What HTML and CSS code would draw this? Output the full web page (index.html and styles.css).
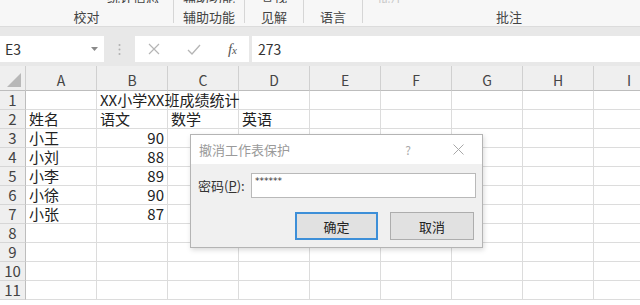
FILE: index.html
```html
<!DOCTYPE html>
<html lang="zh-CN">
<head>
  <meta charset="UTF-8" />
  <title>撤消工作表保护</title>
  <link rel="stylesheet" href="styles.css">
</head>
<body>

  <div class="ribbon">
    <div class="group g-proof">
      <div class="cut"><span class="cut-text left">统计信息</span></div>
      <div class="glabel">校对</div>
    </div>
    <div class="group g-access">
      <div class="cut"><span class="cut-text">辅助功能</span></div>
      <div class="glabel">辅助功能</div>
    </div>
    <div class="group g-insight">
      <div class="cut"><span class="cut-text">查找</span></div>
      <div class="glabel">见解</div>
    </div>
    <div class="group g-lang">
      <div class="cut"></div>
      <div class="glabel">语言</div>
    </div>
    <div class="group g-comment">
      <div class="cut"><span class="cut-text pale">批注</span></div>
      <div class="glabel">批注</div>
    </div>
  </div>

  <div class="formula-bar">
    <div class="name-box">
      <span>E3</span>
      <svg class="arrow" width="7" height="4" viewBox="0 0 7 4"><path d="M0 0 L7 0 L3.5 4 Z" fill="#8a8a8a"/></svg>
    </div>
    <div class="grip">
      <svg width="3" height="13" viewBox="0 0 3 13"><circle cx="1.5" cy="2" r="1" fill="#b0b0b0"/><circle cx="1.5" cy="6.5" r="1" fill="#b0b0b0"/><circle cx="1.5" cy="11" r="1" fill="#b0b0b0"/></svg>
    </div>
    <div class="fx-box">
      <svg width="12" height="12" viewBox="0 0 12 12"><path d="M1 1 L11 11 M11 1 L1 11" stroke="#b5b5b5" stroke-width="1.2" fill="none"/></svg>
      <svg width="14" height="11" viewBox="0 0 14 11"><path d="M1 6 L5 10 L13 1" stroke="#b5b5b5" stroke-width="1.3" fill="none"/></svg>
      <span class="fx">f<span class="x">x</span></span>
    </div>
    <div class="formula-input">273</div>
  </div>

  <div class="sheet">
    <div class="grid">
      <div class="corner"><svg width="14" height="14" viewBox="0 0 14 14"><path d="M14 0 L14 14 L0 14 Z" fill="#b8b8b8"/></svg></div>
      <div class="colh">A</div><div class="colh">B</div><div class="colh">C</div><div class="colh">D</div><div class="colh">E</div><div class="colh">F</div><div class="colh">G</div><div class="colh">H</div><div class="colh">I</div>

      <div class="rowh">1</div><div class="cell"></div><div class="cell overflow">XX小学XX班成绩统计</div><div class="cell"></div><div class="cell"></div><div class="cell"></div><div class="cell"></div><div class="cell"></div><div class="cell"></div><div class="cell"></div>
      <div class="rowh">2</div><div class="cell">姓名</div><div class="cell">语文</div><div class="cell">数学</div><div class="cell">英语</div><div class="cell"></div><div class="cell"></div><div class="cell"></div><div class="cell"></div><div class="cell"></div>
      <div class="rowh">3</div><div class="cell">小王</div><div class="cell num">90</div><div class="cell"></div><div class="cell"></div><div class="cell"></div><div class="cell"></div><div class="cell"></div><div class="cell"></div><div class="cell"></div>
      <div class="rowh">4</div><div class="cell">小刘</div><div class="cell num">88</div><div class="cell"></div><div class="cell"></div><div class="cell"></div><div class="cell"></div><div class="cell"></div><div class="cell"></div><div class="cell"></div>
      <div class="rowh">5</div><div class="cell">小李</div><div class="cell num">89</div><div class="cell"></div><div class="cell"></div><div class="cell"></div><div class="cell"></div><div class="cell"></div><div class="cell"></div><div class="cell"></div>
      <div class="rowh">6</div><div class="cell">小徐</div><div class="cell num">90</div><div class="cell"></div><div class="cell"></div><div class="cell"></div><div class="cell"></div><div class="cell"></div><div class="cell"></div><div class="cell"></div>
      <div class="rowh">7</div><div class="cell">小张</div><div class="cell num">87</div><div class="cell"></div><div class="cell"></div><div class="cell"></div><div class="cell"></div><div class="cell"></div><div class="cell"></div><div class="cell"></div>
      <div class="rowh">8</div><div class="cell"></div><div class="cell"></div><div class="cell"></div><div class="cell"></div><div class="cell"></div><div class="cell"></div><div class="cell"></div><div class="cell"></div><div class="cell"></div>
      <div class="rowh">9</div><div class="cell"></div><div class="cell"></div><div class="cell"></div><div class="cell"></div><div class="cell"></div><div class="cell"></div><div class="cell"></div><div class="cell"></div><div class="cell"></div>
      <div class="rowh">10</div><div class="cell"></div><div class="cell"></div><div class="cell"></div><div class="cell"></div><div class="cell"></div><div class="cell"></div><div class="cell"></div><div class="cell"></div><div class="cell"></div>
      <div class="rowh">11</div><div class="cell"></div><div class="cell"></div><div class="cell"></div><div class="cell"></div><div class="cell"></div><div class="cell"></div><div class="cell"></div><div class="cell"></div><div class="cell"></div>
    </div>

    <div class="dialog">
      <div class="dlg-title">
        <span class="dlg-name">撤消工作表保护</span>
        <span class="dlg-help">?</span>
        <svg class="dlg-close" width="11" height="11" viewBox="0 0 11 11"><path d="M0.5 0.5 L10.5 10.5 M10.5 0.5 L0.5 10.5" stroke="#a8a8a8" stroke-width="1" fill="none"/></svg>
      </div>
      <div class="dlg-body">
        <div class="pw-row">
          <label class="pw-label">密码(<u>P</u>):</label>
          <div class="pw-input">******</div>
        </div>
        <div class="btn-row">
          <button class="btn primary">确定</button>
          <button class="btn">取消</button>
        </div>
      </div>
    </div>
  </div>

</body>
</html>
```

FILE: styles.css
```css
body {
  margin: 0;
  width: 640px;
  height: 305px;
  overflow: hidden;
  background: #ffffff;
  font-family: "Noto Sans CJK SC", "Noto Sans", sans-serif;
  color: #333;
}

/* ribbon */
.ribbon {
  display: flex;
  height: 26px;
  background: #f7f7f7;
  border-bottom: 1px solid #dcdcdc;
  overflow: hidden;
}

.group {
  flex-shrink: 0;
  border-right: 1px solid #d6d6d6;
  height: 23px;
}

.g-proof { width: 173px; }
.g-access { width: 70px; }
.g-insight { width: 58px; }
.g-lang { width: 58px; }
.g-comment { width: 292px; border-right: none; }

.cut {
  height: 3px;
  overflow: hidden;
}

.cut-text {
  display: block;
  font-size: 13px;
  line-height: 13px;
  margin-top: -10px;
  text-align: center;
  color: #444;
}

.cut-text.left {
  text-align: right;
  padding-right: 14px;
}

.cut-text.pale {
  color: #c8c8c8;
  text-align: left;
  padding-left: 14px;
}

.glabel {
  font-size: 13px;
  line-height: 20px;
  margin-top: 4px;
  text-align: center;
  color: #444;
}

/* formula bar */
.formula-bar {
  display: flex;
  align-items: stretch;
  background: #e8e8e8;
  padding: 9px 0 4px 0;
  height: 26px;
}

.name-box {
  width: 104px;
  background: #fff;
  display: flex;
  align-items: center;
  justify-content: space-between;
  padding: 0 6px 0 5px;
  box-sizing: border-box;
  font-size: 14px;
  color: #333;
}

.grip {
  width: 31px;
  display: flex;
  align-items: center;
  justify-content: center;
}

.fx-box {
  width: 114px;
  background: #fff;
  display: flex;
  align-items: center;
  justify-content: space-between;
  padding: 0 12px 0 13px;
  box-sizing: border-box;
}

.fx {
  font-family: "Liberation Serif", serif;
  font-style: italic;
  font-size: 15px;
  color: #555;
}

.fx .x {
  font-size: 11px;
}

.formula-input {
  flex: 1;
  margin-left: 3px;
  background: #fff;
  font-size: 14px;
  line-height: 26px;
  padding-left: 6px;
  color: #333;
}

/* sheet */
.sheet {
  position: relative;
  overflow: hidden;
  height: 240px;
}

.grid {
  display: grid;
  grid-template-columns: 26px repeat(9, 71px);
  grid-template-rows: 25px repeat(11, 19px);
  width: 665px;
}

.corner,
.colh,
.rowh {
  background: #efefef;
  color: #444;
  box-sizing: border-box;
}

.corner {
  display: flex;
  align-items: flex-end;
  justify-content: flex-end;
  padding: 0 4px 3px 0;
  border-right: 1px solid #cfcfcf;
  border-bottom: 1px solid #bdbdbd;
}

.colh {
  font-size: 14px;
  text-align: center;
  border-right: 1px solid #d0d0d0;
  border-bottom: 1px solid #bdbdbd;
  padding-top: 4px;
  line-height: 20px;
}

.rowh {
  font-size: 15px;
  line-height: 18px;
  text-align: center;
  border-right: 1px solid #bdbdbd;
  border-bottom: 1px solid #d6d6d6;
}

.cell {
  border-right: 1px solid #dcdcdc;
  border-bottom: 1px solid #dcdcdc;
  font-size: 15px;
  line-height: 18px;
  padding: 0 3px;
  box-sizing: border-box;
  white-space: nowrap;
  color: #222;
}

.cell.overflow {
  overflow: visible;
  position: relative;
  z-index: 1;
}

.cell.num {
  text-align: right;
}

/* dialog */
.dialog {
  position: absolute;
  left: 190px;
  top: 68px;
  width: 293px;
  height: 114px;
  border: 1px solid #b4b4b4;
  box-sizing: border-box;
  background: #f0f0f0;
  box-shadow: 1px 2px 5px rgba(0, 0, 0, 0.15);
  z-index: 2;
}

.dlg-title {
  display: flex;
  align-items: center;
  height: 29px;
  background: #fff;
  padding: 0 18px 0 8px;
}

.dlg-name {
  flex: 1;
  font-size: 13px;
  color: #9a9a9a;
}

.dlg-help {
  font-size: 12px;
  color: #aaa;
  margin-right: 42px;
}

.dlg-body {
  padding: 9px 6px 0 7px;
}

.pw-row {
  display: flex;
  align-items: center;
}

.pw-label {
  font-size: 13px;
  color: #333;
  width: 53px;
}

.pw-input {
  width: 225px;
  height: 25px;
  box-sizing: border-box;
  background: #fff;
  border: 1px solid #b9b9b9;
  font-family: "DejaVu Sans", sans-serif;
  font-size: 9px;
  line-height: 14px;
  padding-left: 3px;
  color: #333;
}

.btn-row {
  display: flex;
  justify-content: flex-end;
  gap: 12px;
  margin-top: 14px;
  padding-right: 2px;
}

.btn {
  width: 84px;
  height: 28px;
  background: #e1e1e1;
  border: 1px solid #adadad;
  font-family: "Noto Sans CJK SC", sans-serif;
  font-size: 13px;
  color: #222;
  padding: 0;
}

.btn.primary {
  width: 83px;
  border: 2px solid #3d8fd8;
}
```
